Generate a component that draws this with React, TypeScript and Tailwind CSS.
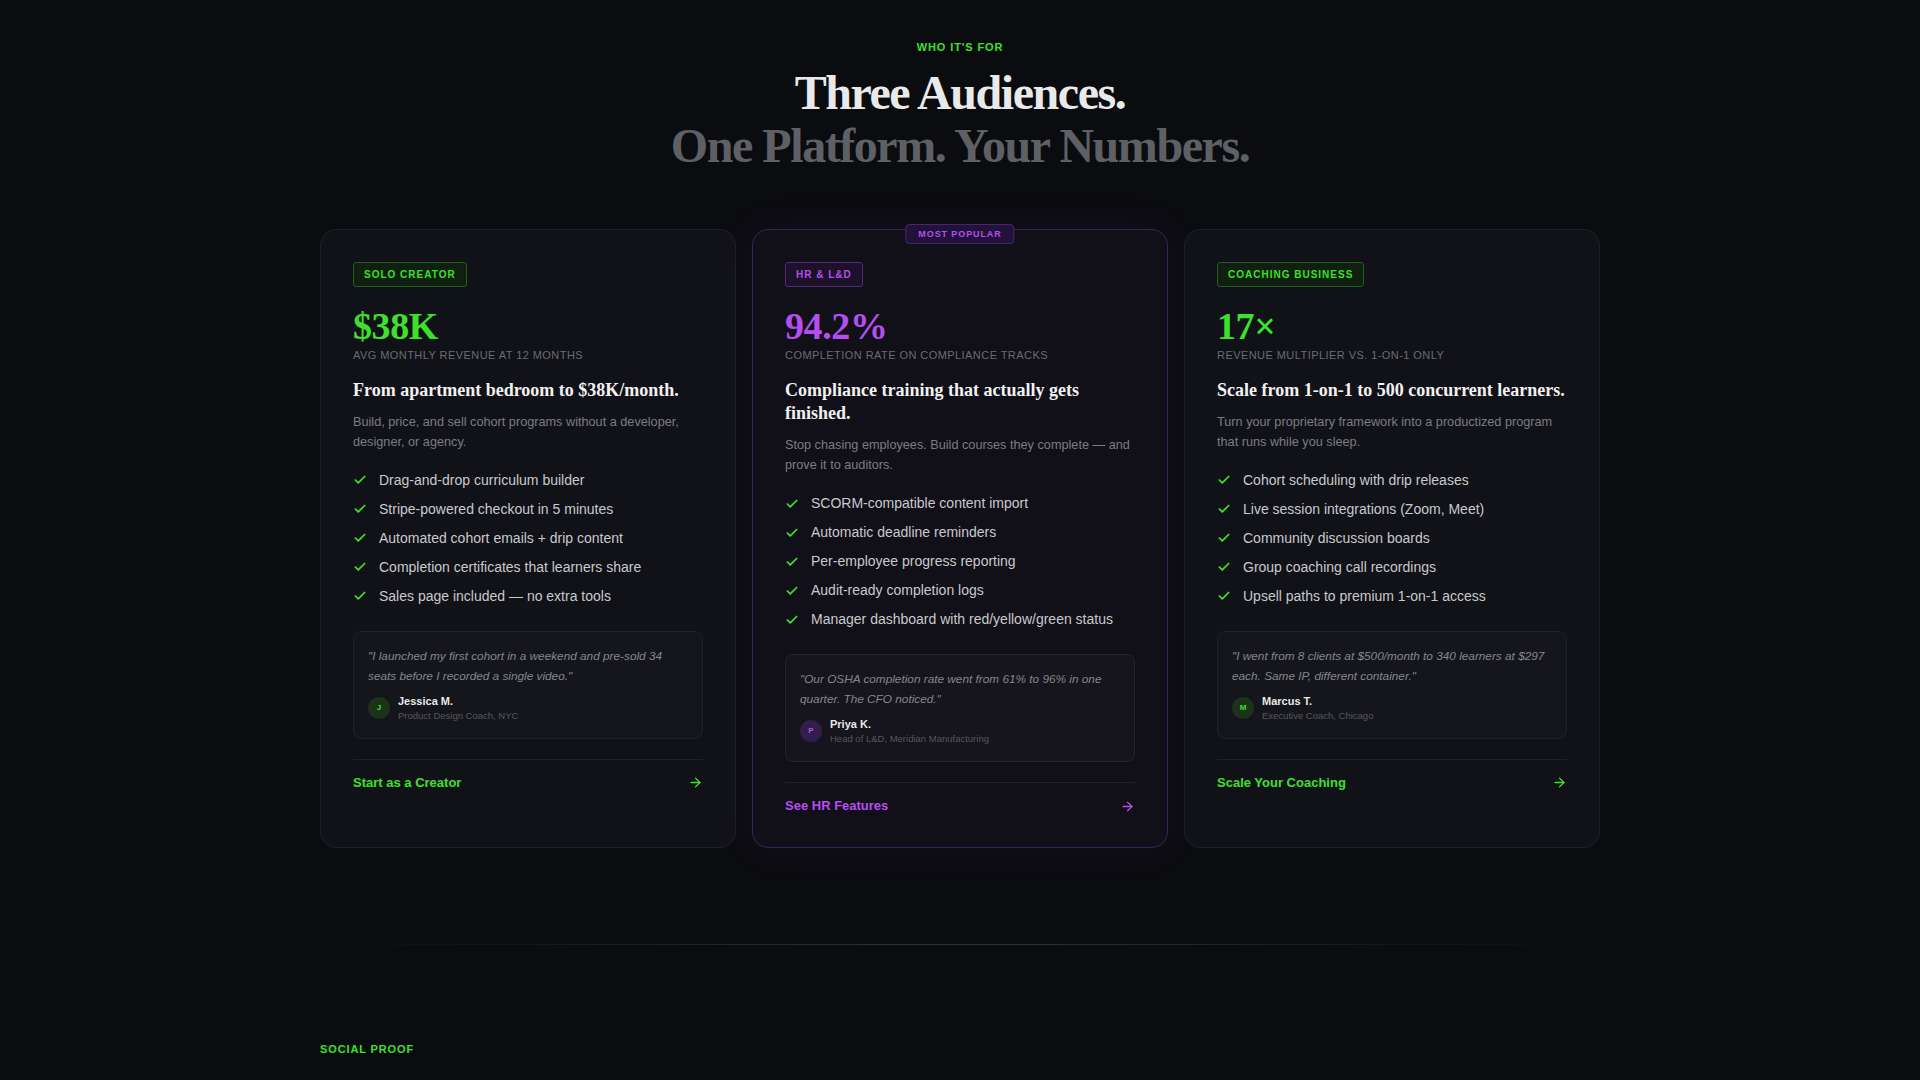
import React from "react";
import { Check, ArrowRight } from "lucide-react";

type Tone = "green" | "purple";

interface Audience {
  tag: string;
  stat: string;
  statLabel: string;
  headline: string;
  body: string;
  features: string[];
  quote: string;
  name: string;
  role: string;
  cta: string;
  tone: Tone;
  featured?: boolean;
}

const audiences: Audience[] = [
  {
    tag: "Solo Creator",
    stat: "$38K",
    statLabel: "Avg monthly revenue at 12 months",
    headline: "From apartment bedroom to $38K/month.",
    body: "Build, price, and sell cohort programs without a developer, designer, or agency.",
    features: [
      "Drag-and-drop curriculum builder",
      "Stripe-powered checkout in 5 minutes",
      "Automated cohort emails + drip content",
      "Completion certificates that learners share",
      "Sales page included — no extra tools",
    ],
    quote:
      '"I launched my first cohort in a weekend and pre-sold 34 seats before I recorded a single video."',
    name: "Jessica M.",
    role: "Product Design Coach, NYC",
    cta: "Start as a Creator",
    tone: "green",
  },
  {
    tag: "HR & L&D",
    stat: "94.2%",
    statLabel: "Completion rate on compliance tracks",
    headline: "Compliance training that actually gets finished.",
    body: "Stop chasing employees. Build courses they complete — and prove it to auditors.",
    features: [
      "SCORM-compatible content import",
      "Automatic deadline reminders",
      "Per-employee progress reporting",
      "Audit-ready completion logs",
      "Manager dashboard with red/yellow/green status",
    ],
    quote: '"Our OSHA completion rate went from 61% to 96% in one quarter. The CFO noticed."',
    name: "Priya K.",
    role: "Head of L&D, Meridian Manufacturing",
    cta: "See HR Features",
    tone: "purple",
    featured: true,
  },
  {
    tag: "Coaching Business",
    stat: "17×",
    statLabel: "Revenue multiplier vs. 1-on-1 only",
    headline: "Scale from 1-on-1 to 500 concurrent learners.",
    body: "Turn your proprietary framework into a productized program that runs while you sleep.",
    features: [
      "Cohort scheduling with drip releases",
      "Live session integrations (Zoom, Meet)",
      "Community discussion boards",
      "Group coaching call recordings",
      "Upsell paths to premium 1-on-1 access",
    ],
    quote:
      '"I went from 8 clients at $500/month to 340 learners at $297 each. Same IP, different container."',
    name: "Marcus T.",
    role: "Executive Coach, Chicago",
    cta: "Scale Your Coaching",
    tone: "green",
  },
];

const serif = "font-['Liberation_Serif','Times_New_Roman',serif]";

const AudienceCard: React.FC<{ a: Audience }> = ({ a }) => {
  const green = a.tone === "green";
  const accent = green ? "text-[#3ee02c]" : "text-[#b44ef0]";

  return (
    <div
      className={`relative flex flex-col rounded-2xl border px-8 pb-8 pt-[31px] ${
        a.featured
          ? "border-[#3d2255] bg-[#110f17] shadow-[0_0_40px_rgba(168,85,247,0.07)]"
          : "border-[#1e1f25] bg-[#111217]"
      }`}
    >
      {a.featured && (
        <div className="absolute left-1/2 top-[-6px] -translate-x-1/2 rounded border border-[#4b2470] bg-[#22123a] px-3 py-[3px] text-[9px] font-bold uppercase leading-[12px] tracking-[0.1em] text-[#b44ef0]">
          Most Popular
        </div>
      )}

      {/* Tag */}
      <div>
        <span
          className={`inline-block rounded-[3px] border px-2.5 py-1 text-[10px] font-bold uppercase leading-[15px] tracking-[0.1em] ${
            green
              ? "border-[#245a20] bg-[#0f1f10] text-[#3ee02c]"
              : "border-[#54287a] bg-[#1d1029] text-[#b44ef0]"
          }`}
        >
          {a.tag}
        </span>
      </div>

      {/* Stat */}
      <div className={`mt-5 text-[38px] font-bold leading-none tracking-[-0.01em] ${serif} ${accent}`}>
        {a.stat}
      </div>
      <div className="mt-0.5 text-[11px] uppercase leading-4 tracking-[0.04em] text-[#6b6c72]">
        {a.statLabel}
      </div>

      {/* Headline */}
      <h3 className={`mt-4 text-[18px] font-bold leading-[1.3] text-[#f1f1f2] ${serif}`}>
        {a.headline}
      </h3>
      <p className="mt-2.5 text-[12.7px] leading-5 text-[#7b7c82]">{a.body}</p>

      {/* Features */}
      <ul className="mt-[18px] flex flex-col gap-2">
        {a.features.map((f) => (
          <li key={f} className="flex items-center gap-3 text-[14px] leading-[21px] text-[#c9c9cd]">
            <Check size={14} strokeWidth={3} className="shrink-0 text-[#3ee02c]" />
            {f}
          </li>
        ))}
      </ul>

      {/* Testimonial */}
      <div
        className={`mt-6 rounded-lg border px-3.5 pb-[15px] pt-3.5 ${
          a.featured ? "border-[#25222d] bg-[#16141c]" : "border-[#222329] bg-[#15161b]"
        }`}
      >
        <p className="text-[11.8px] italic leading-5 text-[#85868c]">{a.quote}</p>
        <div className="mt-[7px] flex items-center gap-2">
          <div
            className={`flex h-[22px] w-[22px] items-center justify-center rounded-full text-[8px] font-bold ${
              green ? "bg-[#1a3319] text-[#3ee02c]" : "bg-[#331d4a] text-[#b44ef0]"
            }`}
          >
            {a.name.charAt(0)}
          </div>
          <div className="flex flex-col">
            <span className="text-[11px] font-bold leading-4 text-[#e8e8ea]">{a.name}</span>
            <span className="text-[9.5px] leading-[14px] text-[#55565c]">{a.role}</span>
          </div>
        </div>
      </div>

      {/* CTA */}
      <div className="mt-5 border-t border-[#1f2026] pt-3.5">
        <a href="#" className={`flex items-center justify-between text-[13px] font-bold leading-[18px] ${accent}`}>
          {a.cta}
          <ArrowRight size={15} strokeWidth={2.25} />
        </a>
      </div>
    </div>
  );
};

export default function App() {
  return (
    <div className="min-h-screen bg-[#0b0c10] font-['Liberation_Sans',Arial,sans-serif] text-white">
      {/* Who it's for */}
      <section className="px-8 pb-24 pt-[39px]">
        <div className="mx-auto max-w-[1280px]">
          <div className="text-center">
            <p className="text-[11px] font-bold uppercase leading-4 tracking-[0.08em] text-[#3ee02c]">
              Who it's for
            </p>
            <h2 className={`mt-3 text-[48px] font-bold leading-[1.1] tracking-[-0.03em] ${serif}`}>
              <span className="text-[#e9e9ea]">Three Audiences.</span>
              <br />
              <span className="text-[#5f6066]">One Platform. Your Numbers.</span>
            </h2>
          </div>

          <div className="mt-14 grid grid-cols-3 gap-4">
            {audiences.map((a) => (
              <AudienceCard key={a.tag} a={a} />
            ))}
          </div>
        </div>
      </section>

      {/* Divider */}
      <div className="mx-auto max-w-[1280px]">
        <div className="h-px bg-linear-to-r from-transparent via-[#2a2d31] to-transparent" />
        <div className="mx-auto -mt-px h-px w-1/2 bg-linear-to-r from-transparent via-[#1f3a20] to-transparent" />
      </div>

      {/* Social proof */}
      <section className="px-8 pt-24">
        <div className="mx-auto max-w-[1280px]">
          <p className="text-[11px] font-bold uppercase leading-4 tracking-[0.08em] text-[#3ee02c]">
            Social Proof
          </p>
          <h2 className={`mt-[15px] text-[48px] font-bold leading-[1.1] tracking-[-0.035em] text-[#e9e9ea] ${serif}`}>
            Real creators. Real revenue.
          </h2>
        </div>
      </section>
    </div>
  );
}
